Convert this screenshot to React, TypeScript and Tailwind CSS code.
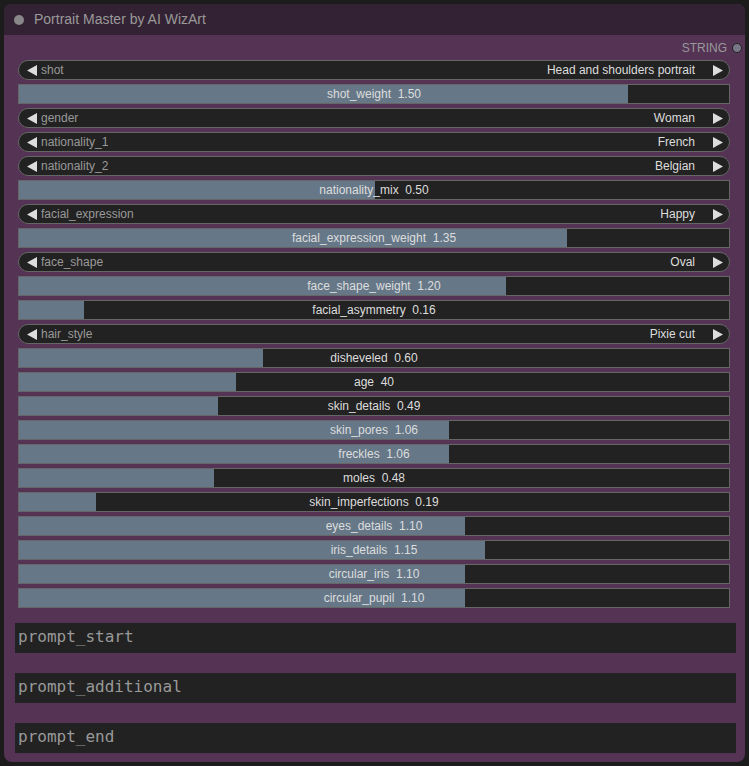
type W =
  | { kind: "combo"; name: string; value: string }
  | { kind: "slider"; name: string; value: string; fill: number };

const WIDGETS: W[] = [
  { kind: "combo", name: "shot", value: "Head and shoulders portrait" },
  { kind: "slider", name: "shot_weight", value: "1.50", fill: 609 },
  { kind: "combo", name: "gender", value: "Woman" },
  { kind: "combo", name: "nationality_1", value: "French" },
  { kind: "combo", name: "nationality_2", value: "Belgian" },
  { kind: "slider", name: "nationality_mix", value: "0.50", fill: 356 },
  { kind: "combo", name: "facial_expression", value: "Happy" },
  { kind: "slider", name: "facial_expression_weight", value: "1.35", fill: 548 },
  { kind: "combo", name: "face_shape", value: "Oval" },
  { kind: "slider", name: "face_shape_weight", value: "1.20", fill: 487 },
  { kind: "slider", name: "facial_asymmetry", value: "0.16", fill: 65 },
  { kind: "combo", name: "hair_style", value: "Pixie cut" },
  { kind: "slider", name: "disheveled", value: "0.60", fill: 244 },
  { kind: "slider", name: "age", value: "40", fill: 217 },
  { kind: "slider", name: "skin_details", value: "0.49", fill: 199 },
  { kind: "slider", name: "skin_pores", value: "1.06", fill: 430 },
  { kind: "slider", name: "freckles", value: "1.06", fill: 430 },
  { kind: "slider", name: "moles", value: "0.48", fill: 195 },
  { kind: "slider", name: "skin_imperfections", value: "0.19", fill: 77 },
  { kind: "slider", name: "eyes_details", value: "1.10", fill: 446 },
  { kind: "slider", name: "iris_details", value: "1.15", fill: 466 },
  { kind: "slider", name: "circular_iris", value: "1.10", fill: 446 },
  { kind: "slider", name: "circular_pupil", value: "1.10", fill: 446 },
];

function Arrow({ dir }: { dir: "left" | "right" }) {
  return (
    <svg width="10" height="11" viewBox="0 0 10 11" className="shrink-0">
      <polygon points={dir === "left" ? "10,0 10,11 0,5.5" : "0,0 0,11 10,5.5"} fill="#ddd" />
    </svg>
  );
}

function Combo({ name, value }: { name: string; value: string }) {
  return (
    <div className="flex items-center h-[20px] rounded-full bg-[#222] border border-[#666] pl-[8px] pr-[6px] text-[12px]">
      <Arrow dir="left" />
      <span className="ml-[4px] text-[#999]">{name}</span>
      <span className="ml-auto text-[#ddd]">{value}</span>
      <span className="ml-[18px]">
        <Arrow dir="right" />
      </span>
    </div>
  );
}

function Slider({ name, value, fill }: { name: string; value: string; fill: number }) {
  return (
    <div className="relative h-[20px] bg-[#222] border border-[#666] text-[12px]">
      <div className="absolute left-0 top-0 bottom-0 bg-[#667888]" style={{ width: fill }} />
      <div className="relative flex items-center justify-center h-full text-[#ddd] whitespace-pre">
        {name}  {value}
      </div>
    </div>
  );
}

export default function App() {
  return (
    <div className="w-[749px] h-[766px] bg-[#1c1c1c] p-[4px] font-['Liberation_Sans',Arial,sans-serif]">
      <div className="w-[741px] h-[758px] rounded-[8px] overflow-hidden bg-[#553355] flex flex-col">
        {/* title bar */}
        <div className="h-[31px] shrink-0 bg-[#332233] flex items-center pl-[10px]">
          <div className="w-[10px] h-[10px] rounded-full bg-[#888]" />
          <span className="ml-[10px] text-[14px] text-[#999]">Portrait Master by AI WizArt</span>
        </div>

        {/* output */}
        <div className="flex items-center justify-end h-[14px] mt-[6px] pr-[3px] text-[12px] text-[#999]">
          <span>STRING</span>
          <span className="ml-[5px] w-[10px] h-[10px] rounded-full bg-[#778] border border-[#222]" />
        </div>

        {/* widgets */}
        <div className="flex flex-col gap-[4px] mt-[5px] ml-[14px] mr-[15px]">
          {WIDGETS.map((w) =>
            w.kind === "combo" ? (
              <Combo key={w.name} name={w.name} value={w.value} />
            ) : (
              <Slider key={w.name} name={w.name} value={w.value} fill={w.fill} />
            )
          )}
        </div>

        {/* text areas */}
        <div className="flex flex-col gap-[20px] mt-[15px] ml-[11px] mr-[9px]">
          {["prompt_start", "prompt_additional", "prompt_end"].map((p) => (
            <div
              key={p}
              className="h-[30px] bg-[#222] flex items-center pl-[3px] pb-[2px] text-[16px] text-[#999] font-['DejaVu_Sans_Mono',monospace]"
            >
              {p}
            </div>
          ))}
        </div>
      </div>
    </div>
  );
}
